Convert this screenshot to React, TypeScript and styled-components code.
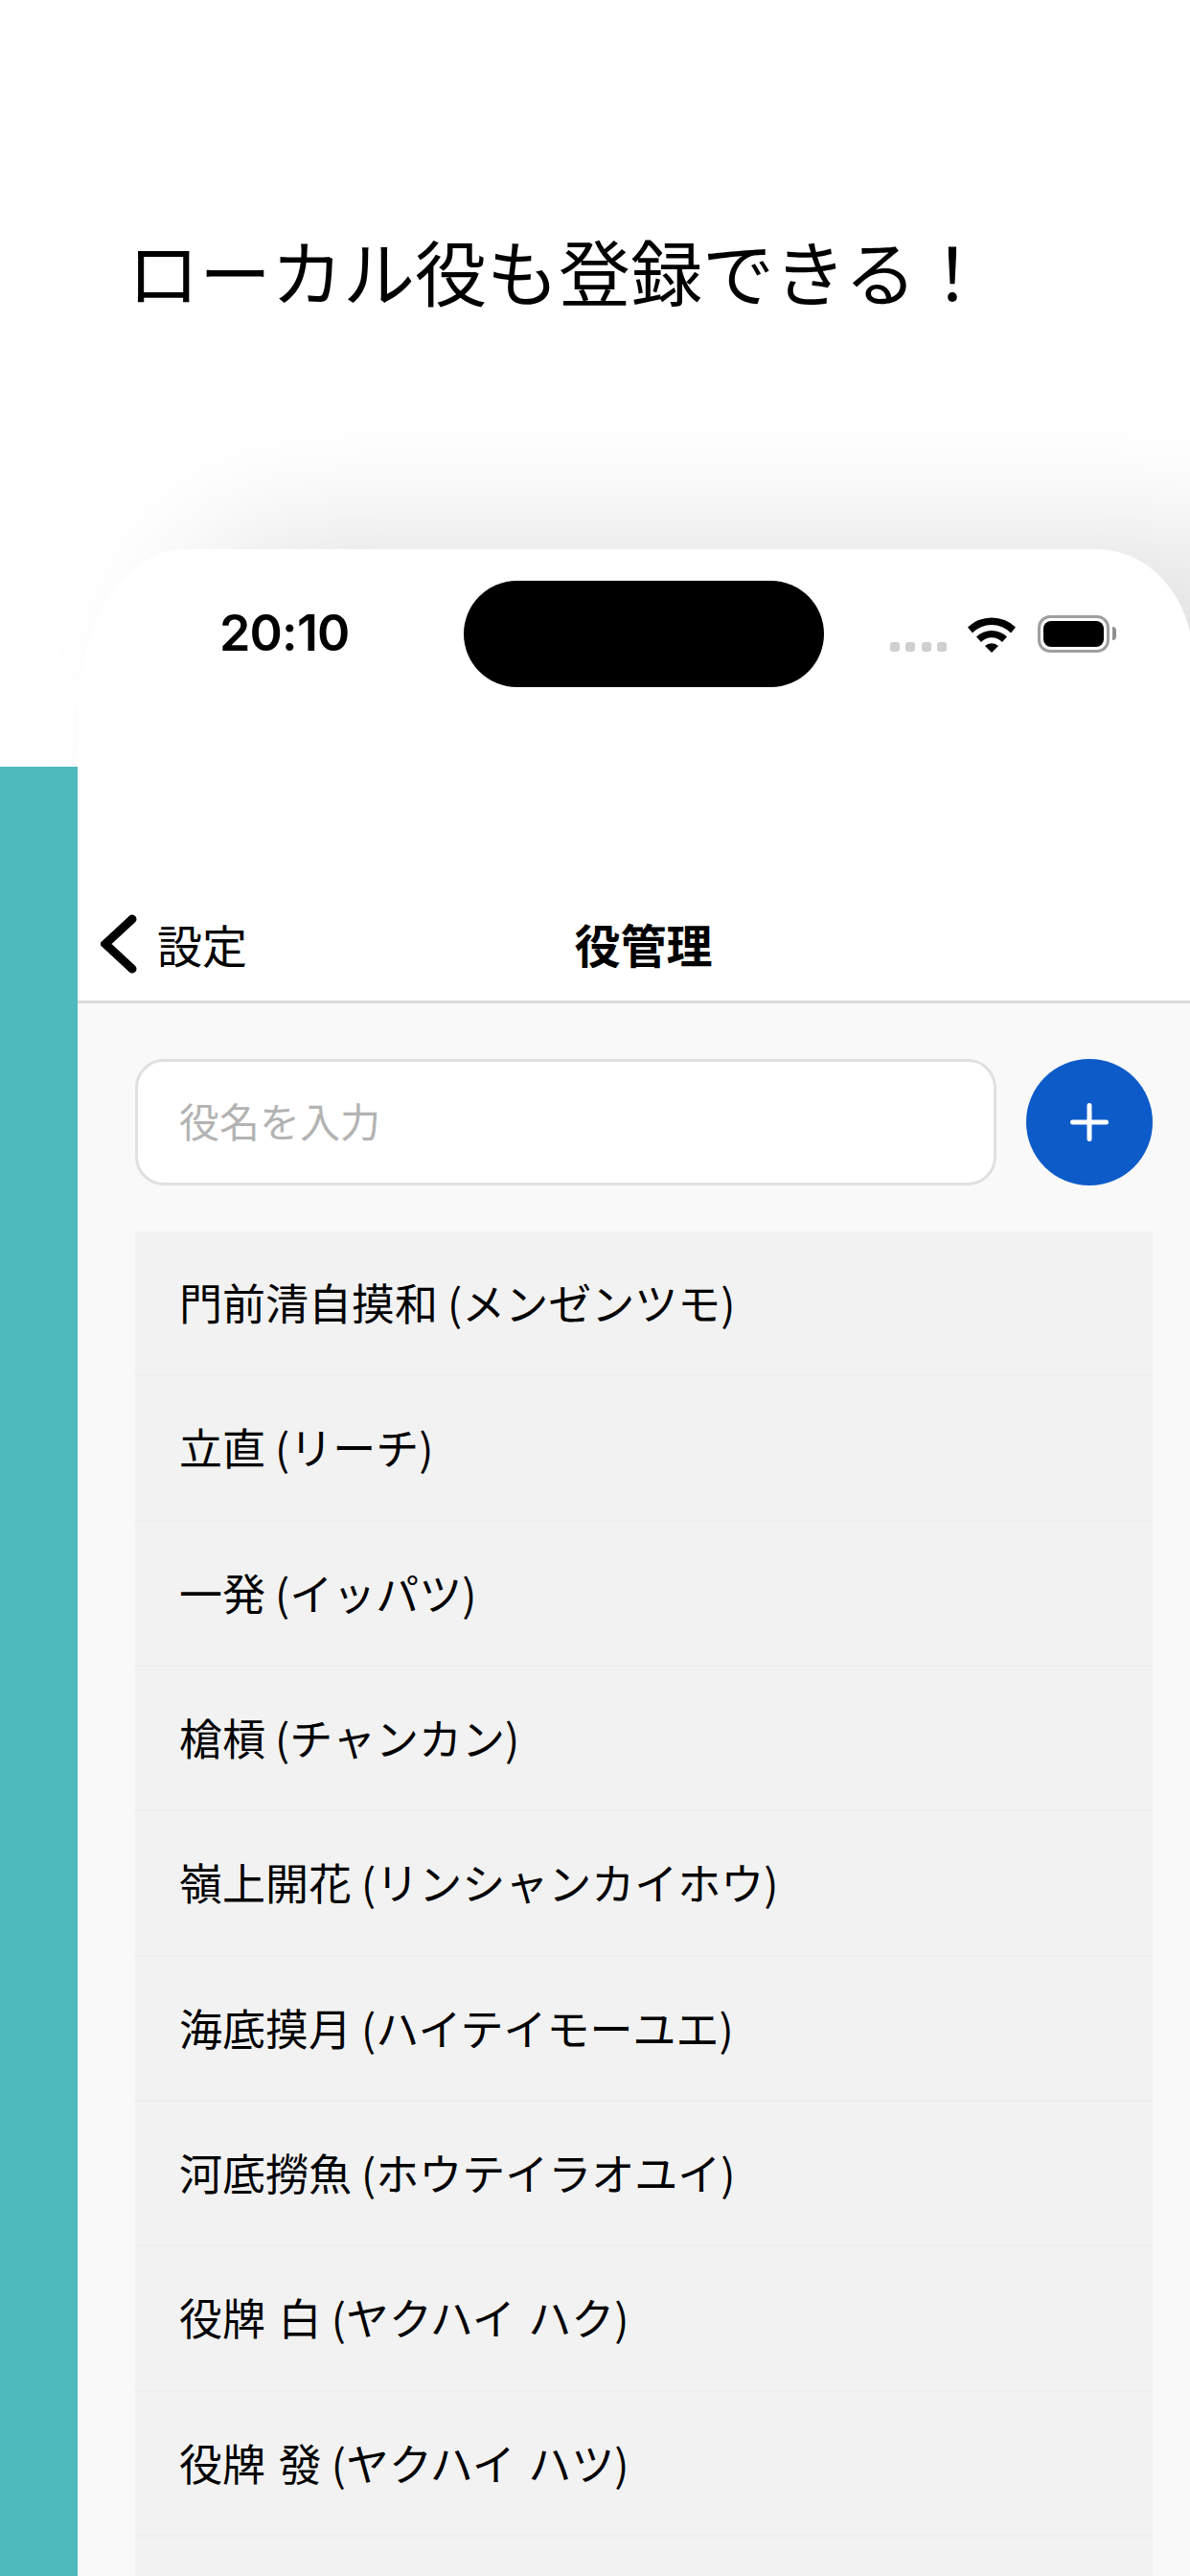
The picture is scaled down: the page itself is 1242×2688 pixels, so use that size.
import React from 'react';
import styled, { createGlobalStyle } from 'styled-components';

const FONT = `"Noto Sans CJK JP", "Noto Sans", sans-serif`;

const YAKU = [
  '門前清自摸和 (メンゼンツモ)',
  '立直 (リーチ)',
  '一発 (イッパツ)',
  '槍槓 (チャンカン)',
  '嶺上開花 (リンシャンカイホウ)',
  '海底摸月 (ハイテイモーユエ)',
  '河底撈魚 (ホウテイラオユイ)',
  '役牌 白 (ヤクハイ ハク)',
  '役牌 發 (ヤクハイ ハツ)',
];

const GlobalStyle = createGlobalStyle`
  html, body {
    margin: 0;
    padding: 0;
    background: #fff;
  }
`;

const Page = styled.div`
  position: relative;
  width: 1242px;
  height: 2688px;
  overflow: hidden;
  background: #fff;
  font-family: ${FONT};
  color: #000;
`;

const Headline = styled.h1`
  margin: 0;
  height: 573px;
  padding: 242px 0 0 133px;
  box-sizing: border-box;
  font-size: 75px;
  line-height: 80px;
  font-weight: 400;
  white-space: nowrap;
`;

const TealStrip = styled.div`
  position: absolute;
  left: 0;
  top: 800px;
  bottom: 0;
  width: 81px;
  background: #4fbabd;
`;

const Phone = styled.div`
  width: 1164px;
  height: 2115px;
  margin-left: 81px;
  background: #fff;
  border-radius: 112px 100px 0 0 / 170px 115px 0 0;
  box-shadow: 100px -10px 140px rgba(0, 0, 0, 0.125);
`;

/* the screen runs on past the page's right edge */
const Screen = styled.div`
  width: 1181px;
  height: 100%;
  display: flex;
  flex-direction: column;
`;

const StatusBar = styled.div`
  display: flex;
  align-items: flex-start;
  height: 332px;
  padding-top: 33px;
  box-sizing: border-box;
`;

const Time = styled.div`
  width: 132px;
  margin: 26px 0 0 148px;
  font-family: Inter, "Liberation Sans", sans-serif;
  font-size: 52px;
  line-height: 58px;
  font-weight: 600;
  letter-spacing: -0.8px;
  white-space: nowrap;
`;

const Island = styled.div`
  width: 376px;
  height: 111px;
  margin-left: 123px;
  border-radius: 56px;
  background: #000;
`;

const StatusIcons = styled.div`
  display: flex;
  align-items: flex-end;
  margin: 36px 0 0 69px;
  height: 39px;
`;

const SignalDots = styled.div`
  display: flex;
  gap: 6.3px;
  margin-right: 22px;
  padding-bottom: 1px;
`;

const SignalDot = styled.span`
  width: 10px;
  height: 10px;
  border-radius: 3px;
  background: #cfcfcf;
`;

const Battery = styled.div`
  position: relative;
  width: 75px;
  height: 39px;
  margin-left: 23px;
  padding: 3px;
  box-sizing: border-box;
  border: 3px solid #9f9f9f;
  border-radius: 13px;

  &::before {
    content: '';
    display: block;
    height: 100%;
    border-radius: 8px;
    background: #000;
  }

  &::after {
    content: '';
    position: absolute;
    right: -10px;
    top: 9px;
    width: 4px;
    height: 14px;
    border-radius: 0 7px 7px 0;
    background: #8f8f8f;
  }
`;

const NavBar = styled.div`
  display: grid;
  grid-template-columns: 1fr auto 1fr;
  align-items: center;
  height: 142px;
  padding: 21px 24px 0;
  box-sizing: border-box;
  border-bottom: 3px solid #d9d9d9;
`;

const BackLink = styled.div`
  display: flex;
  align-items: center;
  gap: 21px;
  font-size: 47px;
  line-height: 60px;
`;

const NavTitle = styled.div`
  padding-bottom: 3px;
  font-size: 48px;
  line-height: 60px;
  font-weight: 700;
`;

const Content = styled.div`
  flex: 1;
  display: flex;
  flex-direction: column;
  padding: 58px 59px 0 60px;
  background: #f9f9f9;
`;

const InputRow = styled.div`
  display: flex;
  gap: 31px;
`;

const NameInput = styled.input`
  flex: 1;
  min-width: 0;
  height: 132px;
  padding: 0 43px 5px;
  box-sizing: border-box;
  border: 3px solid #e0e0e0;
  border-radius: 30px;
  background: #fff;
  font-family: ${FONT};
  font-size: 42px;
  outline: none;

  &::placeholder {
    color: #b3b3b3;
    opacity: 1;
  }
`;

const AddButton = styled.button`
  flex: none;
  display: flex;
  align-items: center;
  justify-content: center;
  width: 132px;
  height: 132px;
  padding: 0;
  border: none;
  border-radius: 50%;
  background: #0d5bc9;
`;

const YakuList = styled.div`
  flex: 1;
  margin-top: 48px;
  background: #f2f2f2;
`;

const YakuRow = styled.div`
  height: 151.33px;
  padding: 0 46px;
  box-sizing: border-box;
  border-bottom: 2px solid #eeeeee;
  font-size: 45px;
  line-height: 147px;
  white-space: pre;
  word-spacing: 3.5px;
`;

const Reading = styled.span`
  margin-left: -3.5px;
`;

const App: React.FC = () => {
  return (
    <Page>
      <GlobalStyle />
      <Headline>ローカル役も登録できる！</Headline>
      <Phone>
        <Screen>
          <StatusBar>
            <Time>20:10</Time>
            <Island />
            <StatusIcons>
              <SignalDots>
                {[0, 1, 2, 3].map((i) => (
                  <SignalDot key={i} />
                ))}
              </SignalDots>
              <svg width="50" height="38" viewBox="0 0 50 38">
                <path d="M0 11.5A36 36 0 0 1 50 11.5L45 17.5A28 28 0 0 0 5 17.5Z" fill="#000" />
                <path d="M9 21.5A23 23 0 0 1 41 21.5L36 27A15 15 0 0 0 14 27Z" fill="#000" />
                <path d="M18 31A10 10 0 0 1 32 31L25 38Z" fill="#000" />
              </svg>
              <Battery />
            </StatusIcons>
          </StatusBar>
          <NavBar>
            <BackLink>
              <svg width="38" height="62" viewBox="0 0 38 62">
                <path
                  d="M33 5L5 31L33 57"
                  fill="none"
                  stroke="#000"
                  strokeWidth="9"
                  strokeLinecap="round"
                  strokeLinejoin="miter"
                />
              </svg>
              <span>設定</span>
            </BackLink>
            <NavTitle>役管理</NavTitle>
            <span />
          </NavBar>
          <Content>
            <InputRow>
              <NameInput placeholder="役名を入力" readOnly />
              <AddButton aria-label="追加">
                <svg width="40" height="40" viewBox="0 0 40 40">
                  <path d="M20 2.5V37.5M2.5 20H37.5" stroke="#fff" strokeWidth="5" strokeLinecap="round" />
                </svg>
              </AddButton>
            </InputRow>
            <YakuList>
              {YAKU.map((yaku) => {
                const [name, reading] = yaku.split(' (');
                return (
                  <YakuRow key={yaku}>
                    {name} <Reading>({reading}</Reading>
                  </YakuRow>
                );
              })}
            </YakuList>
          </Content>
        </Screen>
      </Phone>
      <TealStrip />
    </Page>
  );
};

export default App;
